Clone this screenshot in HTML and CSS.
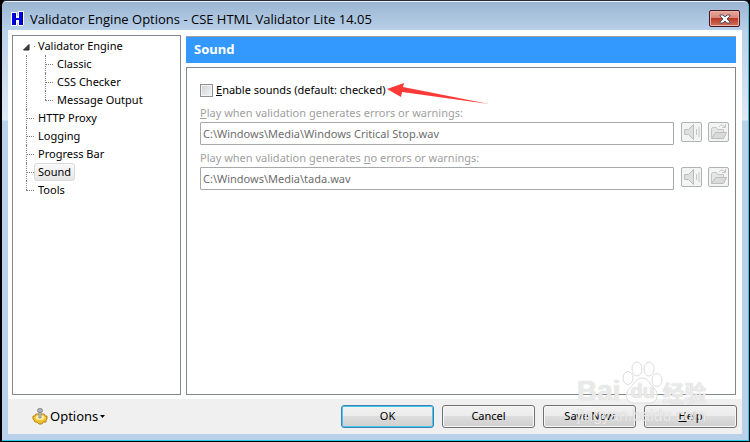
FILE: index.html
```html
<!DOCTYPE html>
<html lang="en">
  <head>
    <meta charset="UTF-8" />
    <meta name="viewport" content="width=device-width, initial-scale=1.0" />
    <title>Validator Engine Options</title>
    <link rel="stylesheet" href="styles.css">
  </head>
  <body>
    <div class="window">
      <div class="titlebar">
        <svg class="logo" width="14" height="16" viewBox="0 0 14 16">
          <path d="M0 1h6v4h1V0h6v14h-1v1H7v-3H6v3H0z" fill="#fff" />
          <path d="M1 2h3v5h4V1h4v13H8V9H5v5H1z" fill="#0000f0" />
          <path d="M4 2h1v5H4zM11 1h1v13h-1zM4 9h1v5H4z" fill="#000060" />
        </svg>
        <h1 class="title">Validator Engine Options - CSE HTML Validator Lite 14.05</h1>
        <button class="close" type="button" aria-label="Close">
          <svg width="12" height="10" viewBox="0 0 12 10">
            <path d="M1 1h3l2 2 2-2h3v1L8 5l3 3v1H8L6 7 4 9H1V8l3-3-3-3z" fill="#fff" stroke="#535666" />
          </svg>
        </button>
      </div>
      <div class="content">
        <ul class="tree">
          <li class="root">
            <svg class="expander" width="7" height="7" viewBox="0 0 7 7">
              <path d="M6 .5V6H.5z" fill="#404040" stroke="#262626" />
            </svg>
            <span class="node">Validator Engine</span>
            <ul class="branch">
              <li><span class="node">Classic</span></li>
              <li><span class="node">CSS Checker</span></li>
              <li><span class="node">Message Output</span></li>
            </ul>
          </li>
          <li><span class="node">HTTP Proxy</span></li>
          <li><span class="node">Logging</span></li>
          <li><span class="node">Progress Bar</span></li>
          <li><span class="node selected">Sound</span></li>
          <li><span class="node">Tools</span></li>
        </ul>
        <div class="page">
          <h2 class="heading">Sound</h2>
          <div class="panel">
            <div class="check">
              <input type="checkbox" id="enable">
              <label for="enable"><u>E</u>nable sounds (default: checked)</label>
              <svg class="arrow" width="104" height="24" viewBox="0 0 104 24">
                <path d="M1 7L18 1l-1 4 86 17-87-12-1 5z" fill="#fc3a38" />
              </svg>
            </div>
            <label class="caption" for="errors"><u>P</u>lay when validation generates errors or warnings:</label>
            <div class="file">
              <input type="text" id="errors" value="C:\Windows\Media\Windows Critical Stop.wav" disabled>
              <button class="tool" type="button" aria-label="Play" disabled>
                <svg width="17" height="16" viewBox="0 0 17 16">
                  <path d="M1.500 5.500h4l5-5v15l-5-5h-4z" fill="#dedede" stroke="#bdbdbd" />
                  <path d="M13.500 5v6M16 3v10" stroke="#c4c4c4" fill="none" />
                </svg>
              </button>
              <button class="tool" type="button" aria-label="Browse" disabled>
                <svg width="17" height="16" viewBox="0 0 17 16">
                  <path d="M1.500 14V5l1-1.500h4l1 2h6V8" fill="#e6e6e6" stroke="#c4c4c4" />
                  <path d="M1.500 14.500l4-6h11l-3 6z" fill="#dadada" stroke="#bdbdbd" />
                  <path d="M9 3q3-4 6 0M15.500 0v3.500H12" stroke="#c4c4c4" fill="none" />
                </svg>
              </button>
            </div>
            <label class="caption" for="noerrors">Play when validation generates <u>n</u>o errors or warnings:</label>
            <div class="file">
              <input type="text" id="noerrors" value="C:\Windows\Media\tada.wav" disabled>
              <button class="tool" type="button" aria-label="Play" disabled>
                <svg width="17" height="16" viewBox="0 0 17 16">
                  <path d="M1.500 5.500h4l5-5v15l-5-5h-4z" fill="#dedede" stroke="#bdbdbd" />
                  <path d="M13.500 5v6M16 3v10" stroke="#c4c4c4" fill="none" />
                </svg>
              </button>
              <button class="tool" type="button" aria-label="Browse" disabled>
                <svg width="17" height="16" viewBox="0 0 17 16">
                  <path d="M1.500 14V5l1-1.500h4l1 2h6V8" fill="#e6e6e6" stroke="#c4c4c4" />
                  <path d="M1.500 14.500l4-6h11l-3 6z" fill="#dadada" stroke="#bdbdbd" />
                  <path d="M9 3q3-4 6 0M15.500 0v3.500H12" stroke="#c4c4c4" fill="none" />
                </svg>
              </button>
            </div>
          </div>
        </div>
      </div>
      <div class="footer">
        <button class="options" type="button">
          <svg width="16" height="17" viewBox="0 0 16 17">
            <path d="M1 8l2 0 1-2h8l1 2h2v3l-1 1v2h-3l-1 2H7l-2-2H3l-1-2-1-1z" fill="#f2c230" stroke="#b78312" />
            <ellipse cx="8" cy="9.500" rx="4.500" ry="2.500" fill="#fff0a0" />
            <path d="M7 3h2v7H7z" fill="#c8ccd2" stroke="#8c9098" />
            <ellipse cx="8" cy="2.500" rx="2.500" ry="2" fill="#b4b8be" stroke="#80848a" />
          </svg>
          <span>Options</span>
          <svg width="5" height="3" viewBox="0 0 5 3"><path d="M0 0h5L2.500 3z" fill="#000" /></svg>
        </button>
        <button class="btn default" type="button">OK</button>
        <button class="btn" type="button">Cancel</button>
        <button class="btn" type="button">Save Now</button>
        <button class="btn" type="button"><u>H</u>elp</button>
      </div>
      <div class="watermark">
        <div class="brand">
          <span>Bai</span>
          <span class="paw">
            <svg width="42" height="44" viewBox="0 0 42 44">
              <g fill="#fff" fill-opacity=".7" stroke="#dcdcdc">
                <ellipse cx="7" cy="17" rx="5" ry="6.500" />
                <ellipse cx="16" cy="8" rx="5" ry="7" />
                <ellipse cx="28" cy="8" rx="5" ry="7" />
                <ellipse cx="36" cy="19" rx="5" ry="6.500" />
                <path d="M21 17c6 0 8 6 12 10 6 6 3 15-4 15H13C5 42 3 33 9 27c4-4 6-10 12-10z" />
              </g>
            </svg>
            <span class="du">du</span>
          </span>
          <span class="cjk">经验</span>
        </div>
        <div class="site">jingyan.baidu.com</div>
      </div>
    </div>
  </body>
</html>
```
FILE: styles.css
```css
* {
  box-sizing: border-box;
  margin: 0;
  padding: 0;
}
body {
  font-family: "Noto Sans", "Open Sans", sans-serif;
  font-size: 11px;
  line-height: 18px;
  color: #000;
  background-color: #000;
}
button,
input {
  font: inherit;
  color: inherit;
}
.window {
  position: relative;
  display: flex;
  flex-direction: column;
  min-height: 100vh;
  padding: 0 7px 7px 6px;
  border: 1px solid #000;
  border-left-width: 2px;
  border-top-color: #262a38;
  border-radius: 6px 6px 0 0;
  background: linear-gradient(#9ab4d1, #b9d1ea 30px, #dce9f6 119px, #b9d1ea 120px);
  box-shadow: inset -1px -1px #2bc8ea, inset 0 1px #e8f2fa;
}
.titlebar {
  display: flex;
  align-items: center;
  height: 29px;
  padding: 6px 2px 0 3px;
}
.title {
  flex: 1;
  margin-left: 5px;
  font-family: "Open Sans", sans-serif;
  font-size: 13px;
  font-weight: normal;
}
.close {
  display: flex;
  align-items: center;
  justify-content: center;
  width: 31px;
  height: 17px;
  border: 1px solid #45161f;
  border-radius: 2px;
  background: linear-gradient(#e8a79c, #d8867a 45%, #b83a25 50%, #d4715c);
  box-shadow: inset 0 0 0 1px #e9b3aa;
}
.content {
  flex: 1;
  display: flex;
  gap: 5px;
  padding: 5px 6px 4px 4px;
  background-color: #fff;
}
.tree {
  width: 169px;
  padding: 1px 0 0 13px;
  border: 1px solid #828790;
  list-style: none;
}
.tree ul {
  list-style: none;
}
.tree li {
  position: relative;
  padding-left: 8px;
}
/* dotted connector lines */
.tree li::before,
.tree li::after {
  content: "";
  position: absolute;
  left: 0;
}
.tree li::before {
  top: 9px;
  width: 8px;
  border-top: 1px dotted #808080;
}
.tree li::after {
  top: 0;
  bottom: 0;
  border-left: 1px dotted #808080;
}
.tree li:last-child::after {
  bottom: auto;
  height: 9px;
}
.tree .root::before {
  left: 8px;
  width: 1px;
}
.tree .root::after {
  top: 18px;
}
.expander {
  position: absolute;
  left: -3px;
  top: 7px;
}
.branch {
  margin-left: 11px;
}
.node {
  display: inline-block;
  height: 18px;
  padding: 0 3px;
  line-height: 16px;
  border: 1px solid transparent;
  vertical-align: top;
}
.selected {
  border-color: #d9d9d9;
  border-radius: 3px;
  background: linear-gradient(#fafafa, #e6e6e6);
}
.page {
  flex: 1;
  display: flex;
  flex-direction: column;
  gap: 4px;
  padding-top: 1px;
}
.heading {
  height: 27px;
  padding-left: 8px;
  border-top: 1px solid #a0a0a0;
  font-size: 13px;
  line-height: 25px;
  color: #fff;
  background-color: #3399ff;
}
.panel {
  flex: 1;
  padding: 13px 6px 0 13px;
  border: 1px solid #828790;
}
.check {
  display: flex;
  align-items: center;
  height: 18px;
  margin-bottom: 5px;
}
.check input {
  appearance: none;
  width: 13px;
  height: 13px;
  margin-right: 3px;
  border: 1px solid #8e8f8f;
  background: linear-gradient(135deg, #cdd0d4, #f6f6f6);
  box-shadow: inset 0 0 0 1px #f4f4f4;
}
.arrow {
  margin-top: 8px;
}
.caption {
  display: block;
  color: #a0a0a0;
}
.file {
  display: flex;
  align-items: flex-start;
  gap: 6px;
  margin-bottom: 4px;
}
.file input {
  flex: 1;
  height: 23px;
  margin-right: 1px;
  padding: 0 2px;
  border: 1px solid #a6a8ab;
  border-radius: 1px;
  color: #6d6d6d;
  background-color: #fff;
}
.tool {
  display: flex;
  align-items: center;
  justify-content: center;
  width: 21px;
  height: 20px;
  border: 1px solid #adb2b5;
  border-radius: 2px;
  background-color: #f4f4f4;
}
.footer {
  display: flex;
  align-items: center;
  gap: 8px;
  height: 35px;
  padding: 0 5px 1px 24px;
  background-color: #f0f0f0;
}
.options {
  display: flex;
  align-items: center;
  gap: 2px;
  margin-right: auto;
  font-size: 13px;
  border: none;
  background: none;
}
.btn {
  width: 93px;
  height: 23px;
  line-height: 20px;
  border: 1px solid #707070;
  border-radius: 3px;
  background: linear-gradient(#f2f2f2, #ebebeb 50%, #dddddd 50%, #cfcfcf);
  box-shadow: inset 0 0 0 1px #f8f8f8;
}
.default {
  border-color: #3c7fb1;
  box-shadow: inset 0 0 0 1px #48c8f0;
}
.watermark {
  position: absolute;
  right: 36px;
  bottom: 16px;
  width: 136px;
  color: rgba(255, 255, 255, 0.7);
  text-shadow: 0 0 1px #b8b8b8;
  pointer-events: none;
}
.brand {
  display: flex;
  align-items: flex-end;
  margin-bottom: 2px;
  font: bold 28px/28px "Liberation Sans", sans-serif;
}
.paw {
  position: relative;
  height: 44px;
}
.du {
  position: absolute;
  left: 10px;
  bottom: 0;
  font-size: 20px;
}
.cjk {
  font-family: "Noto Sans CJK SC", sans-serif;
  font-size: 22px;
}
.site {
  font: 16px/18px "Liberation Sans", sans-serif;
}
```
